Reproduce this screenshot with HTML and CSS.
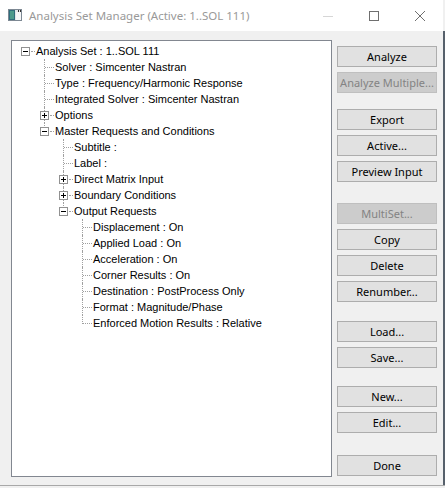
FILE: index.html
```html
<!DOCTYPE html>
<html lang="en">
<head>
    <meta charset="UTF-8">
    <title>Analysis Set Manager</title>
    <link rel="stylesheet" href="styles.css">
</head>
<body>
<div class="window">
    <div class="titlebar">
        <svg class="appicon" width="14" height="12" viewBox="0 0 14 12">
            <rect x=".5" y=".5" width="13" height="11" fill="#dfe4e8" stroke="#7d8893"/>
            <rect x="1" y="1" width="6" height="10" fill="#2f6d7c"/>
            <rect x="2" y="2" width="4" height="8" fill="#4b9a8c"/>
            <rect x="8" y="3" width="5" height="8" fill="#f4f6f8"/>
            <rect x="10" y="1" width="1" height="2" fill="#333"/>
            <rect x="12" y="1" width="1" height="2" fill="#333"/>
        </svg>
        <span class="caption">Analysis Set Manager (Active: 1..SOL 111)</span>
        <div class="capbtn">
            <svg width="10" height="10" viewBox="0 0 10 10"><path d="M0 5.5h10" stroke="#d6d6d6"/></svg>
        </div>
        <div class="capbtn">
            <svg width="10" height="10" viewBox="0 0 10 10"><rect x=".5" y=".5" width="9" height="9" fill="none" stroke="#6f6f6f"/></svg>
        </div>
        <div class="capbtn">
            <svg width="10" height="10" viewBox="0 0 10 10"><path d="M0 0L10 10M10 0L0 10" stroke="#6f6f6f" stroke-width="1"/></svg>
        </div>
    </div>
    <div class="client">
        <div class="treebox">
            <ul class="tree">
                <li>
                    <div class="row"><span class="tw"><svg class="box" viewBox="0 0 9 9"><rect x=".5" y=".5" width="8" height="8" fill="#fff" stroke="#919191"/><path d="M2 4.5h5" stroke="#000"/></svg><i class="hl"></i></span><span>Analysis Set : 1..SOL 111</span></div>
                    <ul>
                        <li><div class="row"><span class="tw"><i class="hl"></i></span><span>Solver : Simcenter Nastran</span></div></li>
                        <li><div class="row"><span class="tw"><i class="hl"></i></span><span>Type : Frequency/Harmonic Response</span></div></li>
                        <li><div class="row"><span class="tw"><i class="hl"></i></span><span>Integrated Solver : Simcenter Nastran</span></div></li>
                        <li><div class="row"><span class="tw"><svg class="box" viewBox="0 0 9 9"><rect x=".5" y=".5" width="8" height="8" fill="#fff" stroke="#919191"/><path d="M2 4.5h5M4.5 2v5" stroke="#000"/></svg><i class="hl"></i></span><span>Options</span></div></li>
                        <li>
                            <div class="row"><span class="tw"><svg class="box" viewBox="0 0 9 9"><rect x=".5" y=".5" width="8" height="8" fill="#fff" stroke="#919191"/><path d="M2 4.5h5" stroke="#000"/></svg><i class="hl"></i></span><span>Master Requests and Conditions</span></div>
                            <ul>
                                <li><div class="row"><span class="tw"><i class="hl"></i></span><span>Subtitle :</span></div></li>
                                <li><div class="row"><span class="tw"><i class="hl"></i></span><span>Label :</span></div></li>
                                <li><div class="row"><span class="tw"><svg class="box" viewBox="0 0 9 9"><rect x=".5" y=".5" width="8" height="8" fill="#fff" stroke="#919191"/><path d="M2 4.5h5M4.5 2v5" stroke="#000"/></svg><i class="hl"></i></span><span>Direct Matrix Input</span></div></li>
                                <li><div class="row"><span class="tw"><svg class="box" viewBox="0 0 9 9"><rect x=".5" y=".5" width="8" height="8" fill="#fff" stroke="#919191"/><path d="M2 4.5h5M4.5 2v5" stroke="#000"/></svg><i class="hl"></i></span><span>Boundary Conditions</span></div></li>
                                <li>
                                    <div class="row"><span class="tw"><svg class="box" viewBox="0 0 9 9"><rect x=".5" y=".5" width="8" height="8" fill="#fff" stroke="#919191"/><path d="M2 4.5h5" stroke="#000"/></svg><i class="hl"></i></span><span>Output Requests</span></div>
                                    <ul>
                                        <li><div class="row"><span class="tw"><i class="hl"></i></span><span>Displacement : On</span></div></li>
                                        <li><div class="row"><span class="tw"><i class="hl"></i></span><span>Applied Load : On</span></div></li>
                                        <li><div class="row"><span class="tw"><i class="hl"></i></span><span>Acceleration : On</span></div></li>
                                        <li><div class="row"><span class="tw"><i class="hl"></i></span><span>Corner Results : On</span></div></li>
                                        <li><div class="row"><span class="tw"><i class="hl"></i></span><span>Destination : PostProcess Only</span></div></li>
                                        <li><div class="row"><span class="tw"><i class="hl"></i></span><span>Format : Magnitude/Phase</span></div></li>
                                        <li><div class="row"><span class="tw"><i class="hl"></i></span><span>Enforced Motion Results : Relative</span></div></li>
                                    </ul>
                                </li>
                            </ul>
                        </li>
                    </ul>
                </li>
            </ul>
        </div>
        <div class="side">
            <div class="group">
                <button class="btn">Analyze</button>
                <button class="btn" disabled>Analyze Multiple...</button>
            </div>
            <div class="group g2">
                <button class="btn">Export</button>
                <button class="btn">Active...</button>
                <button class="btn">Preview Input</button>
            </div>
            <div class="group g3">
                <button class="btn" disabled>MultiSet...</button>
                <button class="btn">Copy</button>
                <button class="btn">Delete</button>
                <button class="btn">Renumber...</button>
            </div>
            <div class="group g4">
                <button class="btn">Load...</button>
                <button class="btn">Save...</button>
            </div>
            <div class="group g5">
                <button class="btn">New...</button>
                <button class="btn">Edit...</button>
            </div>
            <div class="group g6">
                <button class="btn">Done</button>
            </div>
        </div>
    </div>
</div>
<div class="edge"></div>
<div class="under"></div>
</body>
</html>
```

FILE: styles.css
```css
*{
    margin: 0;
    padding: 0;
    box-sizing: border-box;
}
body{
    width: 445px;
    height: 488px;
    overflow: hidden;
    display: grid;
    grid-template-columns: 443px 2px;
    grid-template-rows: 485px 3px;
    background: #f0f0f0;
}
.window{
    display: flex;
    flex-direction: column;
    background: #f0f0f0;
}
.titlebar{
    height: 31px;
    background: #fff;
    display: flex;
    align-items: center;
    padding-left: 8px;
}
.appicon{
    display: block;
    margin-top: -1px;
}
.caption{
    flex: 1;
    margin-left: 7px;
    font: 11.5px "Noto Sans", sans-serif;
    color: #999;
    white-space: nowrap;
}
.capbtn{
    width: 46px;
    height: 31px;
    display: flex;
    align-items: center;
    justify-content: center;
}
.capbtn svg{
    display: block;
}
.edge{
    margin-top: 31px;
    background: #56606b;
}
.under{
    grid-column: 1 / 3;
    border-top: 1px solid #a8a8a8;
    background: #f0f0f0;
}
.client{
    flex: 1;
    display: flex;
    align-items: flex-start;
    padding: 9px 0 0 11px;
}

/* tree view */
.treebox{
    width: 321px;
    height: 437px;
    border: 1px solid #828790;
    background: #fff;
    padding-top: 2px;
    font: 11px "Liberation Sans", Arial, sans-serif;
    color: #000;
}
.tree, .tree ul{
    list-style: none;
}
.tree ul{
    padding-left: 19px;
}
.tree li{
    position: relative;
}
.tree ul > li::before{
    content: '';
    position: absolute;
    left: 13px;
    top: 0;
    bottom: 0;
    border-left: 1px dotted #a0a0a0;
}
.tree ul > li:last-child::before{
    bottom: auto;
    height: 9px;
}
.row{
    display: flex;
    align-items: center;
    height: 16px;
    padding-left: 9px;
    white-space: nowrap;
}
.tw{
    display: flex;
    align-items: flex-start;
    flex: none;
    width: 15px;
    height: 16px;
}
.hl{
    display: block;
    margin: 8px 0 0 5px;
    width: 9px;
    border-top: 1px dotted #a0a0a0;
}
.box{
    display: block;
    position: relative;
    width: 9px;
    height: 9px;
    margin-top: 4px;
}
.box + .hl{
    margin-left: 1px;
    width: 4px;
}

/* buttons */
.side{
    margin: 6px 0 0 5px;
    display: flex;
    flex-direction: column;
}
.group{
    display: flex;
    flex-direction: column;
    gap: 5px;
}
.g2{ margin-top: 16px; }
.g3{ margin-top: 21px; }
.g4{ margin-top: 19px; }
.g5{ margin-top: 18px; }
.g6{ margin-top: 22px; }
.btn{
    width: 100px;
    height: 21px;
    border: 1px solid #adadad;
    background: #e1e1e1;
    color: #000;
    font: 11px "Noto Sans", sans-serif;
    line-height: 19px;
    text-align: center;
}
.btn:disabled{
    background: #cccccc;
    border-color: #bfbfbf;
    color: #838383;
}
```
